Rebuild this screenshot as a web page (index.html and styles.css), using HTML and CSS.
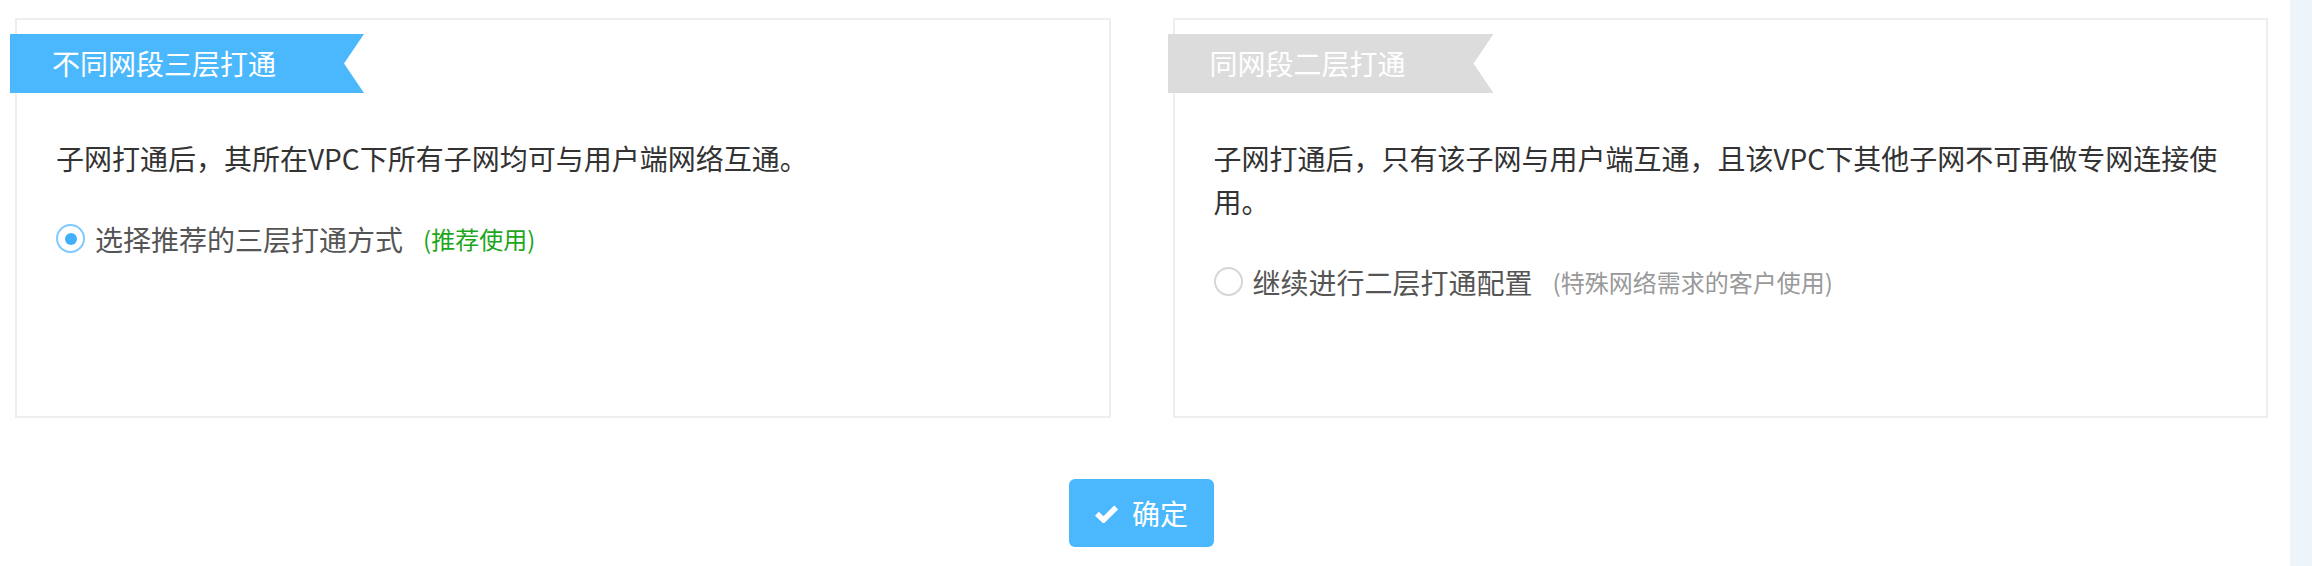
FILE: index.html
```html
<!DOCTYPE html>
<html lang="zh-CN">
<head>
    <meta charset="UTF-8">
    <meta name="viewport" content="width=device-width, initial-scale=1.0">
    <title>子网打通方式</title>
    <link rel="stylesheet" href="styles.css">
</head>
<body>
    <div class="page">
        <div class="main">
            <div class="cards">
                <div class="card">
                    <div class="ribbon">不同网段三层打通</div>
                    <p class="desc">子网打通后，其所在VPC下所有子网均可与用户端网络互通。</p>
                    <label class="radio">
                        <span class="radio-dot checked"></span>
                        <span class="radio-text">选择推荐的三层打通方式</span>
                        <span class="hint hint-green">(推荐使用)</span>
                    </label>
                </div>
                <div class="card">
                    <div class="ribbon ribbon-gray">同网段二层打通</div>
                    <p class="desc">子网打通后，只有该子网与用户端互通，且该VPC下其他子网不可再做专网连接使用。</p>
                    <label class="radio">
                        <span class="radio-dot"></span>
                        <span class="radio-text">继续进行二层打通配置</span>
                        <span class="hint">(特殊网络需求的客户使用)</span>
                    </label>
                </div>
            </div>
            <div class="actions">
                <button class="btn" type="button">
                    <svg class="btn-icon" viewBox="0 0 22 18" width="23" height="19">
                        <path d="M1.8 9.2 L8.2 15.2 L20.2 3.2" fill="none" stroke="#fff" stroke-width="5.2" stroke-linejoin="miter"/>
                    </svg>
                    确定
                </button>
            </div>
        </div>
        <div class="side"></div>
    </div>
</body>
</html>
```

FILE: styles.css
```css
body {
    margin: 0;
    padding: 0;
    background: #fff;
    font-family: "Noto Sans CJK SC", "Liberation Sans", sans-serif;
    color: #333;
}
.page {
    display: flex;
    height: 566px;
}
.main {
    flex: 1;
    padding: 18px 22px 0 15px;
}
.side {
    width: 22px;
    background: #edf5fa;
}
.cards {
    display: flex;
    gap: 62px;
}
.card {
    flex: 1;
    border: 2px solid #eeeeee;
    padding: 14px 30px 113px 39px;
}
.ribbon {
    display: inline-block;
    margin-left: -46px;
    height: 59px;
    line-height: 59px;
    padding: 0 88px 0 42px;
    background: #4bb8fd;
    color: #fff;
    font-size: 28px;
    clip-path: polygon(0 0, 100% 0, calc(100% - 20px) 50%, 100% 100%, 0 100%);
}
.ribbon-gray {
    background: #dcdcdc;
}
.desc {
    margin: 44px 0 0;
    font-size: 28px;
    line-height: 43px;
    color: #333;
}
.radio {
    display: flex;
    align-items: center;
    margin-top: 37px;
    height: 43px;
    font-size: 28px;
    color: #555;
}
.radio-dot {
    width: 25px;
    height: 25px;
    border: 2px solid #d6d6d6;
    border-radius: 50%;
    margin-right: 10px;
    display: flex;
    align-items: center;
    justify-content: center;
}
.radio-dot.checked {
    border-color: #7fcaff;
}
.radio-dot.checked::after {
    content: "";
    width: 12px;
    height: 12px;
    border-radius: 50%;
    background: #3fb0fb;
}
.hint {
    margin-left: 20px;
    font-size: 24px;
    color: #999;
}
.hint-green {
    color: #1ca61c;
}
.actions {
    margin-top: 61px;
    text-align: center;
}
.btn {
    display: inline-flex;
    align-items: center;
    gap: 14px;
    height: 68px;
    padding: 0 26px;
    border: none;
    border-radius: 6px;
    background: #4bb8fd;
    color: #fff;
    font-family: "Noto Sans CJK SC", "Liberation Sans", sans-serif;
    font-size: 28px;
    cursor: pointer;
}
```
